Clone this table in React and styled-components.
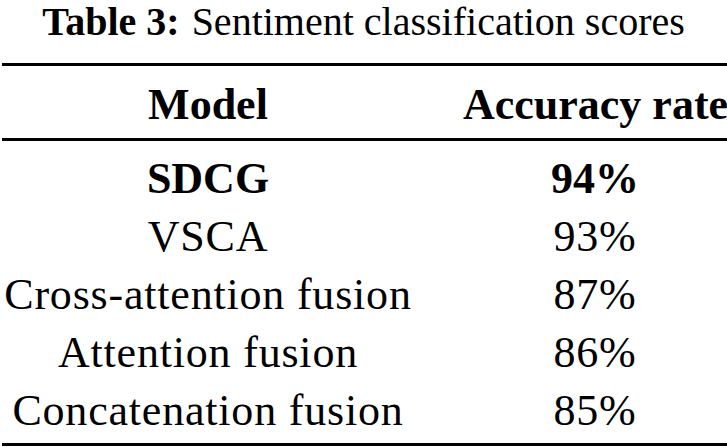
import React from 'react'
import styled, { createGlobalStyle } from 'styled-components'

const rows = [
  { model: 'SDCG', score: '94%', best: true },
  { model: 'VSCA', score: '93%' },
  { model: 'Cross-attention fusion', score: '87%' },
  { model: 'Attention fusion', score: '86%' },
  { model: 'Concatenation fusion', score: '85%' },
]

const GlobalStyle = createGlobalStyle`
  html, body {
    margin: 0;
    padding: 0;
    background: #fff;
  }
  body {
    font-family: 'Liberation Serif', 'Times New Roman', serif;
    color: #000;
  }
`

const Wrap = styled.div`
  width: 727px;
  height: 447px;
  overflow: hidden;
`

const Caption = styled.p`
  margin: 0 0 19px 0;
  font-size: 40px;
  line-height: 44px;
  text-align: center;
  white-space: nowrap;
`

const CaptionLabel = styled.strong`
  font-weight: 700;
  margin-right: 12px;
`

const Rule = styled.hr`
  margin: 0 0 0 2px;
  border: none;
  height: 3px;
  background: #000;
`

const Row = styled.div`
  display: grid;
  grid-template-columns: 416px 264px;
  column-gap: 47px;
  padding: ${(p) => p.pad || '0'};
  font-size: 44px;
  line-height: 58px;
  font-weight: ${(p) => (p.bold ? 700 : 400)};
  letter-spacing: ${(p) => (p.bold ? '0' : '0.8px')};
  text-align: center;
  white-space: nowrap;
`

const Body = styled.div`
  padding: 9px 0 3px 0;
`

const Cell = styled.span`
  display: block;
`

const App = () => {
  return (
    <React.Fragment>
      <GlobalStyle />
      <Wrap>
        <Caption>
          <CaptionLabel>Table 3:</CaptionLabel>
          Sentiment classification scores
        </Caption>
        <Rule />
        <Row bold pad="10px 0 4px 0">
          <Cell>Model</Cell>
          <Cell>Accuracy rate</Cell>
        </Row>
        <Rule />
        <Body>
          {rows.map((r) => (
            <Row key={r.model} bold={r.best}>
              <Cell>{r.model}</Cell>
              <Cell>{r.score}</Cell>
            </Row>
          ))}
        </Body>
        <Rule />
      </Wrap>
    </React.Fragment>
  )
}

export default App
